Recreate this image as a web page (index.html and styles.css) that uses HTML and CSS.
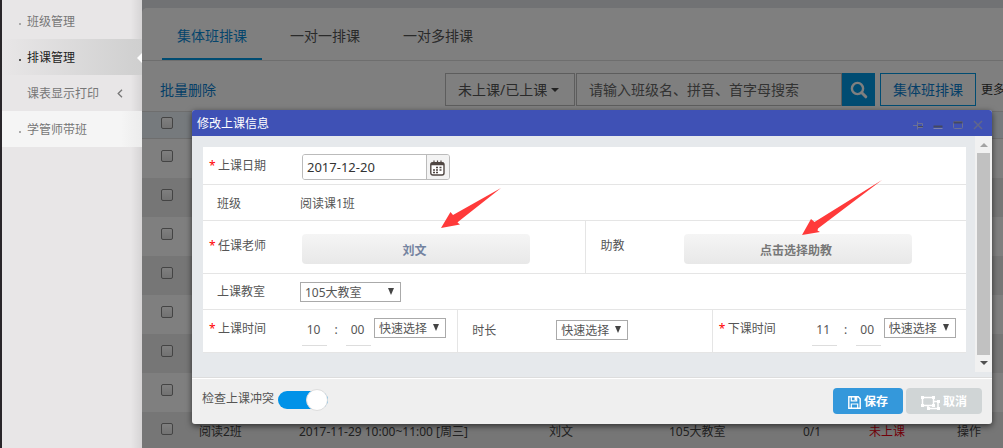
FILE: index.html
```html
<!DOCTYPE html>
<html lang="zh-CN">
<head>
<meta charset="utf-8">
<title>排课管理</title>
<link rel="stylesheet" href="styles.css">
</head>
<body>
<div class="app">
  <div class="rail"></div>
  <nav class="sidebar">
    <a class="nav-item" href="#"><i class="dot"></i>班级管理</a>
    <a class="nav-item active" href="#"><i class="dot"></i>排课管理</a>
    <a class="nav-item" href="#"><i class="dot none"></i>课表显示打印
      <svg class="chevron" width="6" height="9" viewBox="0 0 6 9"><path d="M5 .8 1.2 4.5 5 8.2" fill="none" stroke="#777" stroke-width="1.3"/></svg>
    </a>
    <a class="nav-item light" href="#"><i class="dot"></i>学管师带班</a>
  </nav>
  <main class="main">
    <div class="card">
      <div class="tabs">
        <a class="tab current" href="#">集体班排课</a>
        <a class="tab" href="#">一对一排课</a>
        <a class="tab" href="#">一对多排课</a>
      </div>
      <div class="toolbar">
        <a class="bulk" href="#">批量删除</a>
        <button class="status" type="button">未上课/已上课<i class="caret"></i></button>
        <input class="search" type="text" aria-label="搜索" placeholder="请输入班级名、拼音、首字母搜索">
        <button class="search-btn" type="button" aria-label="搜索">
          <svg width="18" height="18" viewBox="0 0 18 18"><circle cx="7.5" cy="7.5" r="5.6" fill="none" stroke="#fff" stroke-width="2.4"/><path d="m11.8 11.8 4 4" stroke="#fff" stroke-width="3" stroke-linecap="round"/></svg>
        </button>
        <button class="group-btn" type="button">集体班排课</button>
        <a class="more" href="#">更多</a>
      </div>
      <table class="list">
        <thead><tr><th class="c-check"><input type="checkbox" aria-label="全选"></th><th class="c-name"></th><th class="c-time"></th><th class="c-teacher"></th><th class="c-room"></th><th class="c-count"></th><th class="c-state"></th><th></th></tr></thead>
        <tbody>
          <tr><td><input type="checkbox" aria-label="选择"></td><td colspan="7"></td></tr>
          <tr><td><input type="checkbox" aria-label="选择"></td><td colspan="7"></td></tr>
          <tr><td><input type="checkbox" aria-label="选择"></td><td colspan="7"></td></tr>
          <tr><td><input type="checkbox" aria-label="选择"></td><td colspan="7"></td></tr>
          <tr><td><input type="checkbox" aria-label="选择"></td><td colspan="7"></td></tr>
          <tr><td><input type="checkbox" aria-label="选择"></td><td colspan="7"></td></tr>
          <tr><td><input type="checkbox" aria-label="选择"></td><td colspan="7"></td></tr>
          <tr><td><input type="checkbox" aria-label="选择阅读2班"></td><td>阅读2班</td><td>2017-11-29 10:00~11:00 [周三]</td><td>刘文</td><td>105大教室</td><td>0/1</td><td class="pending">未上课</td><td>操作</td></tr>
        </tbody>
      </table>
    </div>
    <div class="mask"></div>
  </main>
</div>

<form class="dialog" role="dialog" aria-labelledby="dlg-title">
  <header class="dlg-head">
    <span id="dlg-title">修改上课信息</span>
    <div class="dlg-tools">
      <button type="button" aria-label="固定"><svg width="10" height="10" viewBox="0 0 10 10"><path d="M0 5.500h4M4.500 1.500v8M5 3.500h4.500v4H5" fill="none" stroke="#6c7194"/><path d="M5 6.500h5" stroke="#454960"/></svg></button>
      <button type="button" aria-label="最小化"><svg width="10" height="10" viewBox="0 0 10 10"><path d="M.5 6.500h9" stroke="#454960" stroke-width="2"/><path d="M.5 8.500h9" stroke="#7c82ac"/></svg></button>
      <button type="button" aria-label="最大化"><svg width="10" height="10" viewBox="0 0 10 10"><rect x=".5" y="1.500" width="9" height="7" rx="1" fill="none" stroke="#6c7194"/><path d="M.5 2.500h9" stroke="#454960" stroke-width="2"/></svg></button>
      <button type="button" aria-label="关闭"><svg width="10" height="10" viewBox="0 0 10 10"><path d="m1 1 8 8M9 1 1 9" stroke="#62678a" stroke-width="1.5"/></svg></button>
    </div>
  </header>

  <div class="dlg-body">
    <div class="fields">
      <div class="row">
        <div class="cell r-date">
          <label class="label" for="date"><b>*</b>上课日期</label>
          <div class="date-box">
            <input id="date" type="text" value="2017-12-20">
            <button type="button" aria-label="选择日期">
              <svg width="15" height="16" viewBox="0 0 15 16"><rect x=".8" y="2.6" width="13.2" height="12.4" rx="2" fill="#fff" stroke="#4f4642" stroke-width="1.4"/><path d="M1 4h13" stroke="#4f4642" stroke-width="2.4"/><path d="M4 .5v4M7.5 .5v4M11 .5v4" stroke="#4f4642" stroke-width="1.2"/><path d="M6 7.5h2M9.5 7.5h2M3 10h2M6 10h2M9.5 10h2M3 12.5h2M6 12.5h2" stroke="#4f4642" stroke-width="1.7"/></svg>
            </button>
          </div>
        </div>
      </div>
      <div class="row">
        <div class="cell r-class"><span class="label">班级</span><span>阅读课1班</span></div>
      </div>
      <div class="row split">
        <div class="cell r-teacher"><span class="label"><b>*</b>任课老师</span><button class="picker chosen" type="button">刘文</button></div>
        <div class="cell r-teacher"><span class="label">助教</span><button class="picker" type="button">点击选择助教</button></div>
      </div>
      <div class="row">
        <div class="cell r-room"><label class="label" for="room">上课教室</label>
          <span class="select wide"><select id="room"><option>105大教室</option></select><svg width="6" height="7" viewBox="0 0 6 7"><path d="M0 0h6L3 7z"/></svg></span>
        </div>
      </div>
      <div class="row thirds">
        <div class="cell r-time">
          <span class="label"><b>*</b>上课时间</span>
          <div class="time"><input type="text" aria-label="上课小时" value="10"><span>:</span><input type="text" aria-label="上课分钟" value="00"></div>
          <span class="select"><select aria-label="上课时间快速选择"><option>快速选择</option></select><svg width="6" height="7" viewBox="0 0 6 7"><path d="M0 0h6L3 7z"/></svg></span>
        </div>
        <div class="cell r-time duration">
          <label class="label" for="duration">时长</label>
          <span class="select"><select id="duration"><option>快速选择</option></select><svg width="6" height="7" viewBox="0 0 6 7"><path d="M0 0h6L3 7z"/></svg></span>
        </div>
        <div class="cell r-time">
          <span class="label"><b>*</b>下课时间</span>
          <div class="time"><input type="text" aria-label="下课小时" value="11"><span>:</span><input type="text" aria-label="下课分钟" value="00"></div>
          <span class="select"><select aria-label="下课时间快速选择"><option>快速选择</option></select><svg width="6" height="7" viewBox="0 0 6 7"><path d="M0 0h6L3 7z"/></svg></span>
        </div>
      </div>
    </div>
    <div class="scrollbar">
      <svg width="8" height="4" viewBox="0 0 8 4"><path d="M0 4 4 0l4 4z" fill="#a3a3a3"/></svg>
      <i class="thumb"></i>
      <svg width="8" height="4" viewBox="0 0 8 4"><path d="M0 0h8L4 4z" fill="#505050"/></svg>
    </div>
  </div>

  <footer class="dlg-foot">
    <label class="conflict">检查上课冲突<input class="switch" type="checkbox" role="switch" checked></label>
    <button class="btn save" type="submit">
      <svg width="13" height="13" viewBox="0 0 13 13"><path d="M.8.8h9.4l2 2v9.4H.8z" fill="none" stroke="#fff" stroke-width="1.4"/><path d="M3.3.8v4h5.4v-4M3.3 12V8h6.4v4" fill="none" stroke="#fff" stroke-width="1.2"/><path d="M6.5 1h1.8v3H6.5z" fill="#fff"/></svg>保存
    </button>
    <button class="btn cancel" type="button">
      <svg width="19" height="14" viewBox="0 0 19 14"><path d="M1.500 1.500h11v8h-11zM13 5.500h4v7H7V10" fill="none" stroke="#fff" stroke-width="1.500"/><path d="M0 0h3v3H0zM11 0h3v3h-3zM0 8h3v3H0zM11 8h3v3h-3zM16 4h3v3h-3zM16 11h3v3h-3zM6 11h3v3H6z" fill="#fff"/></svg>取消
    </button>
  </footer>

  <svg class="arrow first" width="60" height="42" viewBox="0 0 60 42"><path d="M0 40 9.500 24l2.500 3L60 0 17.500 33.500l-1 1 2.500 2z" fill="#ff3a3a"/></svg>
  <svg class="arrow second" width="80" height="56" viewBox="0 0 80 56"><path d="M0 55 9 39l3.500 3L80 0 16 48.500l-.5 2 2.500 1.500z" fill="#ff3a3a"/></svg>
</form>
</body>
</html>
```

FILE: styles.css
```css
* { box-sizing: border-box; }
body {
  margin: 0;
  font: 12px/18px "Noto Sans", "Noto Sans CJK SC", sans-serif;
  color: #555;
}
a { color: inherit; text-decoration: none; }
button, input, select { font: inherit; color: inherit; margin: 0; }
button { padding: 0; border: 0; background: none; }

.app { display: flex; height: 100vh; overflow: hidden; }
.rail { flex: none; width: 2px; background: #29262a; }

/* Sidebar */
.sidebar {
  flex: none;
  width: 140px;
  padding-top: 3px;
  background: linear-gradient(90deg, transparent 92%, rgba(0, 0, 0, .08)), #e8e6e7;
}
.nav-item {
  position: relative;
  display: flex;
  align-items: center;
  height: 36px;
  padding: 2px 0 0 17px;
  color: #777;
}
.dot { width: 2px; height: 2px; margin: 4px 6px 0 0; background: #aaa; }
.dot.none { background: none; }
.nav-item.active { background: linear-gradient(90deg, #e8e6e7, #cfcfcf); color: #222; }
.nav-item.active .dot { background: #555; }
.nav-item.active::after {
  content: "";
  position: absolute;
  right: 0;
  top: 14px;
  border: 5px solid transparent;
  border-left-width: 0;
  border-right-color: #fff;
}
.nav-item.light { background: linear-gradient(90deg, #f5f5f5 85%, #ececec); }
.chevron { margin: 0 19px 2px auto; }

/* Schedule list */
.main { position: relative; flex: 1; min-width: 0; padding-top: 8px; background: #e3e5e9; overflow: hidden; }
.mask { position: absolute; inset: 0; background: rgba(0, 0, 0, .5); }
.card { background: #fff; border-radius: 5px 0 0 0; }
.tabs { display: flex; gap: 13px; padding: 0 20px; border-bottom: 1px solid #ddd; }
.tab { height: 52px; padding: 0 15px; font-size: 14px; line-height: 56px; }
.tab.current { color: #0b8bd8; border-bottom: 2px solid #0099e5; }
.toolbar { display: flex; align-items: center; height: 50px; padding: 7px 0 0 18px; font-size: 14px; white-space: nowrap; }
.toolbar > * { flex: none; }
.bulk { width: 285px; color: #0b7fd0; }
.status {
  display: flex;
  align-items: center;
  gap: 4px;
  width: 130px;
  height: 33px;
  margin-right: 1px;
  padding: 0 12px;
  border: 1px solid #bbb;
}
.caret { border: 4px solid transparent; border-top-color: #444; border-bottom: 0; }
.search { width: 266px; height: 33px; padding: 0 12px; border: 1px solid #bbb; background: #fff; }
.search::placeholder { color: #666; opacity: 1; }
.search-btn { display: grid; place-items: center; width: 33px; height: 33px; background: #0099e5; }
.group-btn { width: 96px; height: 33px; margin: 0 5px; border: 1px solid #0099e5; color: #0b7fd0; }
.more { font-size: 12px; color: #333; }

.list { width: 100%; border-collapse: collapse; table-layout: fixed; white-space: nowrap; }
.list th { height: 27px; padding: 2px 0 0; background: #edf4fb; border: solid #ddd; border-width: 1px 0; }
.list td { height: 39px; padding: 2px 0 0; border: 0; color: #444; }
.list tbody tr:nth-child(even) { background: #ededed; }
.list th:first-child, .list td:first-child { padding-left: 19px; text-align: left; }
.list .c-check { width: 57px; }
.c-name { width: 100px; }
.c-time { width: 250px; }
.c-teacher { width: 120px; }
.c-room { width: 134px; }
.c-count { width: 66px; }
.c-state { width: 88px; }
.list .pending { color: #e60012; }
.list input {
  display: block;
  appearance: none;
  width: 12px;
  height: 12px;
  margin-bottom: 6px;
  border: 1px solid #888;
  border-radius: 2px;
  background: linear-gradient(#fff, #e4e4e4);
}

/* Dialog */
.dialog {
  position: absolute;
  left: 192px;
  right: 11px;
  top: 110px;
  border-radius: 3px;
  background: #efefef;
  box-shadow: 0 2px 6px rgba(0, 0, 0, .6);
}
.dlg-head {
  display: flex;
  align-items: center;
  justify-content: space-between;
  height: 26px;
  padding: 2px 9px 0 5px;
  border-radius: 3px 3px 0 0;
  background: #3f51b5;
  color: #fff;
}
.dlg-tools { display: flex; gap: 10px; padding-top: 2px; }
.dlg-tools svg, .date-box svg { display: block; }
.dlg-body { display: flex; background: #e6e9ec; border-bottom: 1px solid #ddd; }
.fields {
  flex: 1;
  margin: 11px 9px 24px 11px;
  background: #fff;
}
.row { display: grid; border-bottom: 1px solid #e5e5e5; }
.row.split { grid-template-columns: 1fr 1fr; }
.row.thirds { grid-template-columns: 1fr 1fr 1fr; }
.cell { display: flex; align-items: center; min-width: 0; }
.cell + .cell { border-left: 1px solid #e5e5e5; }
.label { flex: none; width: 97px; padding-left: 14px; }
.label b { display: inline-block; width: 9px; margin-left: -9px; font-weight: 400; color: #f00; }
.r-date .label, .r-teacher .label, .r-time .label { width: 99px; padding-left: 15px; }
.r-date { height: 37px; padding-top: 2px; }
.r-date .label { padding-bottom: 2px; }
.r-class { height: 35px; padding-top: 2px; }
.r-teacher { height: 52px; }
.r-teacher .label { padding-bottom: 2px; }
.r-teacher + .r-teacher .label { width: 98px; }
.r-room { height: 35px; }
.r-time { height: 42px; align-items: flex-start; padding-top: 6px; }
.r-time .label { padding-top: 4px; }
.r-time.duration { padding-top: 10px; }
.r-time.duration .label { width: 98px; padding-top: 2px; padding-left: 14px; }

.date-box { display: flex; width: 148px; height: 26px; border: 1px solid #bbb; border-radius: 3px; overflow: hidden; }
.date-box input { flex: 1; min-width: 0; padding: 0 4px; border: 0; font-size: 13px; color: #333; }
.date-box button { width: 23px; padding: 2px 0 0 3px; border-left: 1px solid #bbb; background: #f3f3f3; }

.picker {
  width: 228px;
  height: 30px;
  margin-top: 4px;
  padding: 3px 3px 0 0;
  border-radius: 4px;
  background: linear-gradient(#f5f5f5, #e8e8e8);
  color: #777;
  font-weight: 700;
}
.chosen { color: #7383a0; }
.select { position: relative; flex: none; width: 72px; height: 20px; margin-top: 2px; }
.select.wide { width: 101px; margin-top: 0; }
.duration .select { margin-top: 0; }
.select select {
  appearance: none;
  display: block;
  width: 100%;
  height: 20px;
  padding: 1px 0 0 4px;
  border: 1px solid #aaa;
  border-radius: 0;
  background: #fff;
  line-height: 17px;
}
.select svg { position: absolute; right: 7px; top: 6px; fill: #444; pointer-events: none; }
.time { display: flex; margin-right: 3px; }
.time input { width: 25px; height: 30px; padding: 0 2px 2px 0; border: 0; border-bottom: 1px solid #ddd; text-align: center; background: none; }
.time span { width: 19px; padding-right: 1px; text-align: center; line-height: 27px; }

.scrollbar {
  display: flex;
  flex-direction: column;
  align-items: center;
  width: 17px;
  margin-bottom: 5px;
  padding: 7px 0;
  gap: 6px;
  background: #f1f1f1;
}
.scrollbar svg { flex: none; }
.thumb { flex: 1; width: 13px; background: #c1c1c1; }

.dlg-foot {
  display: flex;
  align-items: center;
  gap: 3px;
  height: 46px;
  padding: 0 10px 2px;
  border-top: 1px solid #fff;
  border-radius: 0 0 3px 3px;
}
.conflict { display: flex; align-items: center; gap: 4px; margin-right: auto; padding-bottom: 4px; }
.switch {
  appearance: none;
  display: flex;
  justify-content: flex-end;
  align-items: center;
  width: 50px;
  height: 18px;
  margin-top: 2px;
  border-radius: 9px;
  background: #0092e8;
}
.switch::before { content: ""; width: 20px; height: 20px; flex: none; border: 1px solid #ddd; border-radius: 50%; background: #fff; }
.btn {
  display: flex;
  align-items: center;
  justify-content: center;
  gap: 3px;
  width: 70px;
  height: 26px;
  padding-top: 2px;
  border-radius: 4px;
  color: #fff;
  font-weight: 700;
}
.btn svg { margin-top: 2px; }
.save { background: #3498db; }
.cancel { width: 76px; background: #d0d5d6; }

/* Pointers over the two picker buttons */
.arrow { position: absolute; pointer-events: none; }
.arrow.first { left: 249px; top: 78px; }
.arrow.second { left: 610px; top: 70px; }
```
